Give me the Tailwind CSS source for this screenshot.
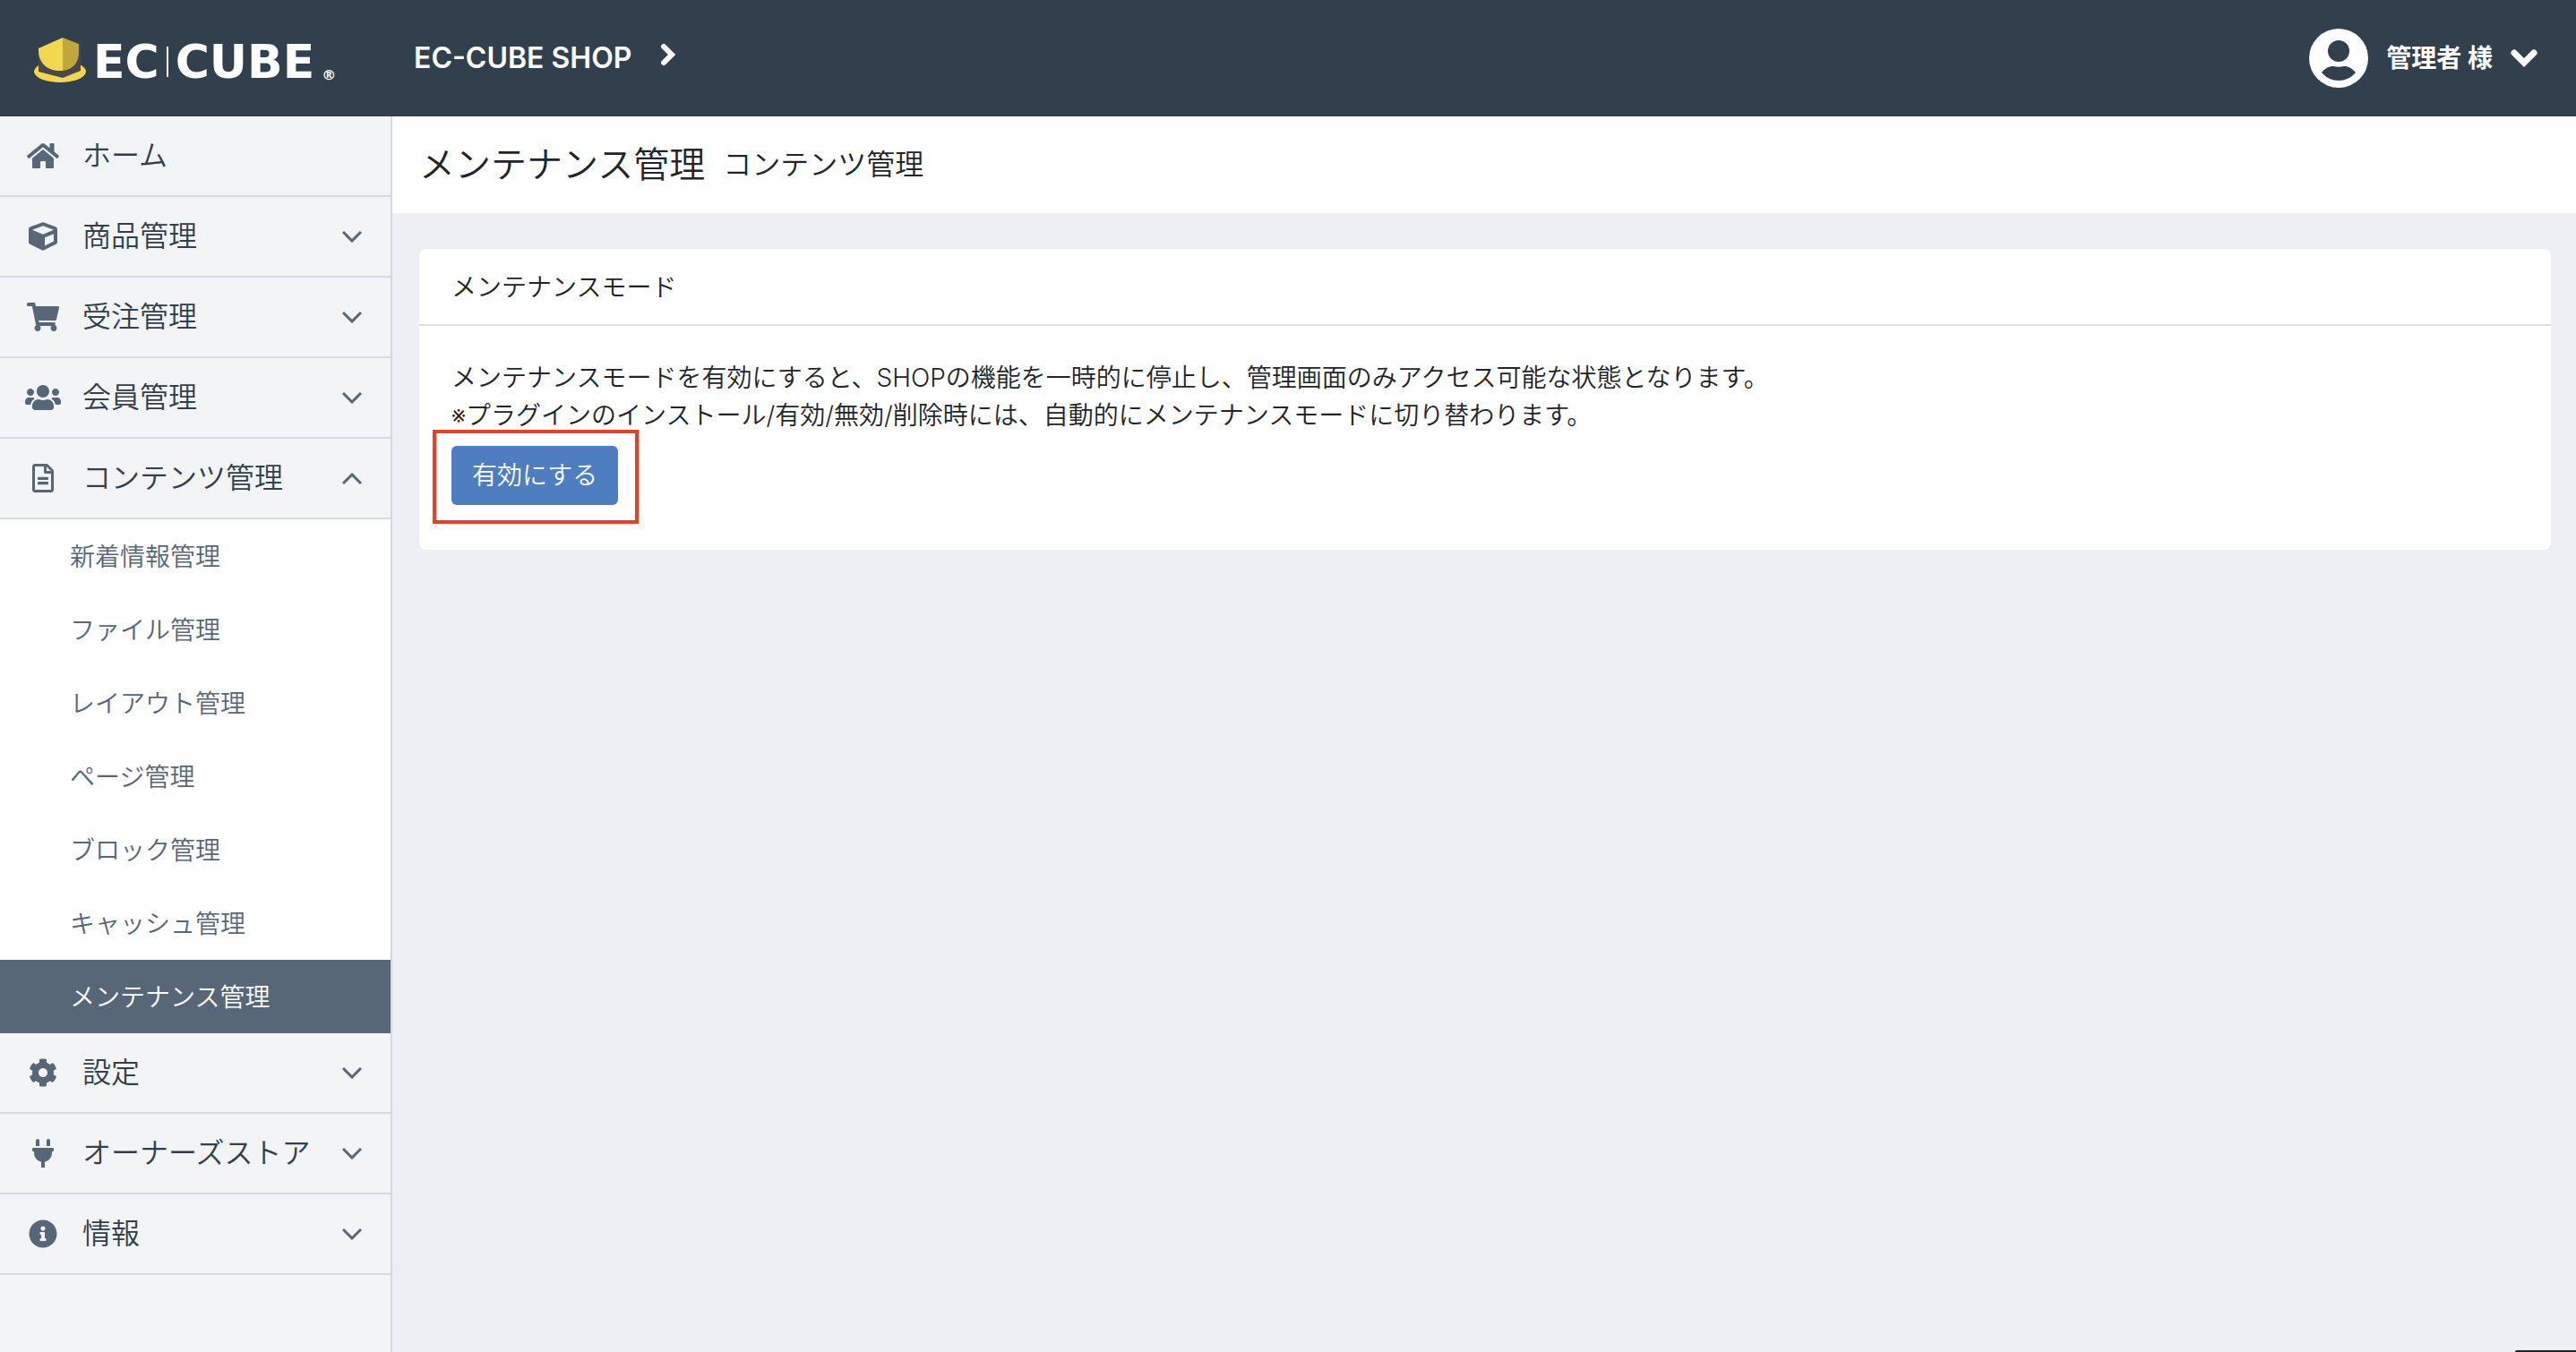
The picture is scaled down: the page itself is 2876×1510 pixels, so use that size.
<!DOCTYPE html>
<html lang="ja">
<head>
  <meta charset="UTF-8">
  <meta name="viewport" content="width=device-width, initial-scale=1">
  <title>メンテナンス管理 コンテンツ管理 - EC-CUBE SHOP</title>
  <script src="https://cdn.jsdelivr.net/npm/@tailwindcss/browser@4"></script>
</head>
<body class="min-h-screen flex flex-col bg-[#eeeff4] text-[#212529] font-['Inter','Noto_Sans_CJK_JP',sans-serif] font-[350] text-[28px] leading-[42px]">

  <!-- header -->
  <header class="h-[130px] flex items-center bg-[#323f4c] text-white">
    <a href="#" class="w-[438px] shrink-0 flex items-center pt-1 pl-[38px]">
      <svg class="w-[58px] h-[50px] shrink-0" viewBox="0 0 58 50" aria-hidden="true">
        <ellipse cx="29" cy="38" rx="29" ry="12" fill="#f3d74f"/>
        <path fill="#4c4650" d="M5 20l45-12h2v29l-20 8-27-7z"/>
        <path fill="#f3d74f" d="M32 0v37h-4C14 37 5 27 5 15v-3z"/>
        <path fill="#c0a73c" d="M32 0l18 7v9c0 12-7 20-18 21z"/>
      </svg>
      <span class="pt-1 ml-2 flex items-center font-['DejaVu_Sans',sans-serif] font-bold text-[52px] leading-[50px]">
        <span>EC</span>
        <span class="mx-2 w-0.5 h-[34px] bg-white"></span>
        <span>CUBE</span>
        <span class="ml-2 self-end text-[16px] leading-[20px]">®</span>
      </span>
    </a>
    <a href="#" class="ml-6 flex items-center gap-8 text-[32px] font-semibold">
      <span>EC-CUBE SHOP</span>
      <svg class="w-[18px] h-[26px] mb-2" viewBox="0 0 18 26" fill="none" stroke="currentColor" stroke-width="6" stroke-linecap="round" aria-hidden="true"><path d="M4 4l9 9-9 9"/></svg>
    </a>
    <button type="button" class="ml-auto mr-[43px] flex items-center gap-5 font-bold">
      <svg class="w-[66px] h-[66px]" viewBox="0 0 66 66" aria-hidden="true">
        <circle cx="33" cy="33" r="33" fill="#fff"/>
        <circle cx="33" cy="25" r="12" fill="#323f4c"/>
        <path fill="#323f4c" d="M14 49c5-6 9-7 13-7 4 1 8 1 12 0 4 0 8 1 13 7-10 12-28 12-38 0z"/>
      </svg>
      <span>管理者 様</span>
      <svg class="w-[30px] h-5" viewBox="0 0 30 20" fill="none" stroke="currentColor" stroke-width="7" stroke-linecap="round" aria-hidden="true"><path d="M4 4l11 11 11-11"/></svg>
    </button>
  </header>

  <div class="flex-1 flex">

    <!-- side navigation -->
    <nav class="w-[438px] shrink-0 border-r-2 border-[#d7d8e0] bg-[#f2f4f6] text-[#323f4c] text-[32px]">
      <a href="#" class="h-[90px] flex items-center gap-6 pl-7 pr-8 border-b-2 border-[#d7d8e0]">
        <svg class="w-10 h-8 fill-[#576777]" viewBox="0 0 576 512" aria-hidden="true"><path d="M280.37 148.26L96 300.11V464a16 16 0 0 0 16 16l112.06-.29a16 16 0 0 0 15.92-16V368a16 16 0 0 1 16-16h64a16 16 0 0 1 16 16v95.64a16 16 0 0 0 16 16.05L464 480a16 16 0 0 0 16-16V300L295.67 148.26a12.19 12.19 0 0 0-15.3 0zM571.6 251.47L488 182.56V44.05a12 12 0 0 0-12-12h-56a12 12 0 0 0-12 12v72.61L318.47 43a48 48 0 0 0-61 0L4.34 251.47a12 12 0 0 0-1.6 16.9l25.5 31A12 12 0 0 0 45.15 301l235.22-193.74a12.19 12.19 0 0 1 15.3 0L530.9 301a12 12 0 0 0 16.9-1.6l25.5-31a12 12 0 0 0-1.7-16.93z"/></svg>
        <span>ホーム</span>
      </a>
      <button type="button" class="w-full h-[90px] flex items-center gap-6 pl-7 pr-8 border-b-2 border-[#d7d8e0]">
        <svg class="w-10 h-8 fill-[#576777]" viewBox="0 0 512 512" aria-hidden="true"><path d="M239.1 6.3l-208 78c-18.7 7-31.1 25-31.1 45v225.1c0 18.2 10.3 34.8 26.5 42.9l208 104c13.5 6.8 29.4 6.8 42.9 0l208-104c16.3-8.1 26.5-24.8 26.5-42.9V129.3c0-20-12.4-37.9-31.1-44.9l-208-78C262 2.2 250 2.2 239.1 6.3zM256 68.4l192 72v1.1l-192 78-192-78v-1.1l192-72zm32 356V275.5l160-65v133.9l-160 80z"/></svg>
        <span>商品管理</span>
        <svg class="ml-auto w-[22px] h-[13px] stroke-[#576777]" viewBox="0 0 22 13" fill="none" stroke-width="3" aria-hidden="true"><path d="M1 1l10 10L21 1"/></svg>
      </button>
      <button type="button" class="w-full h-[90px] flex items-center gap-6 pl-7 pr-8 border-b-2 border-[#d7d8e0]">
        <svg class="w-10 h-8 fill-[#576777]" viewBox="0 0 576 512" aria-hidden="true"><path d="M528.12 301.319l47.273-208C578.806 78.301 567.391 64 551.99 64H159.208l-9.166-44.81C147.758 8.021 137.93 0 126.529 0H24C10.745 0 0 10.745 0 24v16c0 13.255 10.745 24 24 24h69.883l70.248 343.435C147.325 417.1 136 435.222 136 456c0 30.928 25.072 56 56 56s56-25.072 56-56c0-15.674-6.447-29.835-16.824-40h209.647C430.447 426.165 424 440.326 424 456c0 30.928 25.072 56 56 56s56-25.072 56-56c0-22.172-12.888-41.332-31.579-50.405l5.517-24.276c3.413-15.018-8.002-29.319-23.403-29.319H218.117l-6.545-32h293.145c11.206 0 20.92-7.754 23.403-18.681z"/></svg>
        <span>受注管理</span>
        <svg class="ml-auto w-[22px] h-[13px] stroke-[#576777]" viewBox="0 0 22 13" fill="none" stroke-width="3" aria-hidden="true"><path d="M1 1l10 10L21 1"/></svg>
      </button>
      <button type="button" class="w-full h-[90px] flex items-center gap-6 pl-7 pr-8 border-b-2 border-[#d7d8e0]">
        <svg class="w-10 h-8 fill-[#576777]" viewBox="0 0 640 512" aria-hidden="true"><path d="M96 224c35.3 0 64-28.7 64-64s-28.7-64-64-64-64 28.7-64 64 28.7 64 64 64zm448 0c35.3 0 64-28.7 64-64s-28.7-64-64-64-64 28.7-64 64 28.7 64 64 64zm32 32h-64c-17.6 0-33.5 7.1-45.1 18.6 40.3 22.1 68.9 62 75.1 109.4h66c17.7 0 32-14.3 32-32v-32c0-35.3-28.7-64-64-64zm-256 0c61.9 0 112-50.1 112-112S381.9 32 320 32 208 82.1 208 144s50.1 112 112 112zm76.8 32h-8.3c-20.8 10-43.9 16-68.5 16s-47.6-6-68.5-16h-8.3C179.6 288 128 339.6 128 403.2V432c0 26.5 21.5 48 48 48h288c26.5 0 48-21.5 48-48v-28.8c0-63.6-51.6-115.2-115.2-115.2zm-223.7-13.4C161.5 263.1 145.6 256 128 256H64c-35.3 0-64 28.7-64 64v32c0 17.7 14.3 32 32 32h65.9c6.3-47.4 34.9-87.3 75.2-109.4z"/></svg>
        <span>会員管理</span>
        <svg class="ml-auto w-[22px] h-[13px] stroke-[#576777]" viewBox="0 0 22 13" fill="none" stroke-width="3" aria-hidden="true"><path d="M1 1l10 10L21 1"/></svg>
      </button>
      <button type="button" aria-expanded="true" class="w-full h-[90px] flex items-center gap-6 pl-7 pr-8 border-b-2 border-[#d7d8e0]">
        <svg class="w-10 h-8 fill-[#576777]" viewBox="0 0 384 512" aria-hidden="true"><path d="M288 248v28c0 6.6-5.4 12-12 12H108c-6.6 0-12-5.4-12-12v-28c0-6.6 5.4-12 12-12h168c6.6 0 12 5.4 12 12zm-12 72H108c-6.6 0-12 5.4-12 12v28c0 6.6 5.4 12 12 12h168c6.6 0 12-5.4 12-12v-28c0-6.6-5.4-12-12-12zm108-188.1V464c0 26.5-21.5 48-48 48H48c-26.5 0-48-21.5-48-48V48C0 21.5 21.5 0 48 0h204.1C264.8 0 277 5.1 286 14.1L369.9 98c9 8.9 14.1 21.2 14.1 33.9zm-128-80V128h76.1L256 51.9zM336 464V176H232c-13.3 0-24-10.7-24-24V48H48v416h288z"/></svg>
        <span>コンテンツ管理</span>
        <svg class="ml-auto w-[22px] h-[13px] stroke-[#576777]" viewBox="0 0 22 13" fill="none" stroke-width="3" aria-hidden="true"><path d="M1 12L11 2l10 10"/></svg>
      </button>
      <ul class="bg-white text-[#576777] text-[28px]">
        <li><a href="#" class="block pt-[21px] pb-[19px] pl-[78px]">新着情報管理</a></li>
        <li><a href="#" class="block pt-[21px] pb-[19px] pl-[78px]">ファイル管理</a></li>
        <li><a href="#" class="block pt-[21px] pb-[19px] pl-[78px]">レイアウト管理</a></li>
        <li><a href="#" class="block pt-[21px] pb-[19px] pl-[78px]">ページ管理</a></li>
        <li><a href="#" class="block pt-[21px] pb-[19px] pl-[78px]">ブロック管理</a></li>
        <li><a href="#" class="block pt-[21px] pb-[19px] pl-[78px]">キャッシュ管理</a></li>
        <li><a href="#" aria-current="page" class="block pt-[21px] pb-[19px] pl-[78px] bg-[#576777] text-white">メンテナンス管理</a></li>
      </ul>
      <button type="button" class="w-full h-[90px] flex items-center gap-6 pl-7 pr-8 border-b-2 border-[#d7d8e0]">
        <svg class="w-10 h-8 fill-[#576777]" viewBox="0 0 512 512" aria-hidden="true"><path d="M487.4 315.7l-42.6-24.6c4.3-23.2 4.3-47 0-70.2l42.6-24.6c4.9-2.8 7.1-8.6 5.5-14-11.1-35.6-30-67.8-54.7-94.6-3.8-4.1-10-5.1-14.8-2.3L380.8 110c-17.9-15.4-38.5-27.3-60.8-35.1V25.8c0-5.6-3.9-10.5-9.4-11.7-36.7-8.2-74.3-7.8-109.2 0-5.5 1.2-9.4 6.1-9.4 11.7V75c-22.2 7.9-42.8 19.8-60.8 35.1L88.7 85.5c-4.9-2.8-11-1.9-14.8 2.3-24.7 26.7-43.6 58.9-54.7 94.6-1.7 5.4.6 11.2 5.5 14L67.3 221c-4.3 23.2-4.3 47 0 70.2l-42.6 24.6c-4.9 2.8-7.1 8.6-5.5 14 11.1 35.6 30 67.8 54.7 94.6 3.8 4.1 10 5.1 14.8 2.3l42.6-24.6c17.9 15.4 38.5 27.3 60.8 35.1v49.2c0 5.6 3.9 10.5 9.4 11.7 36.7 8.2 74.3 7.8 109.2 0 5.5-1.2 9.4-6.1 9.4-11.7v-49.2c22.2-7.9 42.8-19.8 60.8-35.1l42.6 24.6c4.9 2.8 11 1.9 14.8-2.3 24.7-26.7 43.6-58.9 54.7-94.6 1.5-5.5-.7-11.3-5.6-14.1zM256 336c-44.1 0-80-35.9-80-80s35.9-80 80-80 80 35.9 80 80-35.9 80-80 80z"/></svg>
        <span>設定</span>
        <svg class="ml-auto w-[22px] h-[13px] stroke-[#576777]" viewBox="0 0 22 13" fill="none" stroke-width="3" aria-hidden="true"><path d="M1 1l10 10L21 1"/></svg>
      </button>
      <button type="button" class="w-full h-[90px] flex items-center gap-6 pl-7 pr-8 border-b-2 border-[#d7d8e0]">
        <svg class="w-10 h-8 fill-[#576777]" viewBox="0 0 384 512" aria-hidden="true"><path d="M320,32a32,32,0,0,0-64,0v96h64Zm48,128H16A16,16,0,0,0,0,176v32a16,16,0,0,0,16,16H32v32A160.07,160.07,0,0,0,160,412.8V512h64V412.8A160.07,160.07,0,0,0,352,256V224h16a16,16,0,0,0,16-16V176A16,16,0,0,0,368,160ZM128,32a32,32,0,0,0-64,0v96h64Z"/></svg>
        <span>オーナーズストア</span>
        <svg class="ml-auto w-[22px] h-[13px] stroke-[#576777]" viewBox="0 0 22 13" fill="none" stroke-width="3" aria-hidden="true"><path d="M1 1l10 10L21 1"/></svg>
      </button>
      <button type="button" class="w-full h-[90px] flex items-center gap-6 pl-7 pr-8 border-b-2 border-[#d7d8e0]">
        <svg class="w-10 h-8 fill-[#576777]" viewBox="0 0 512 512" aria-hidden="true"><path d="M256 8C119.043 8 8 119.083 8 256c0 136.997 111.043 248 248 248s248-111.003 248-248C504 119.083 392.957 8 256 8zm0 110c23.196 0 42 18.804 42 42s-18.804 42-42 42-42-18.804-42-42 18.804-42 42-42zm56 254c0 6.627-5.373 12-12 12h-88c-6.627 0-12-5.373-12-12v-24c0-6.627 5.373-12 12-12h12v-64h-12c-6.627 0-12-5.373-12-12v-24c0-6.627 5.373-12 12-12h64c6.627 0 12 5.373 12 12v100h12c6.627 0 12 5.373 12 12v24z"/></svg>
        <span>情報</span>
        <svg class="ml-auto w-[22px] h-[13px] stroke-[#576777]" viewBox="0 0 22 13" fill="none" stroke-width="3" aria-hidden="true"><path d="M1 1l10 10L21 1"/></svg>
      </button>
    </nav>

    <!-- contents -->
    <main class="flex-1">
      <div class="h-[108px] flex items-center gap-5 px-[30px] bg-white">
        <h1 class="text-[40px] font-[350]">メンテナンス管理</h1>
        <span class="text-[32px]">コンテンツ管理</span>
      </div>

      <section class="mt-10 ml-[30px] mr-7 rounded-lg bg-white">
        <h2 class="pt-[22px] pb-5 px-9 border-b-2 border-[#dddddd] font-[350]">メンテナンスモード</h2>
        <div class="px-9 pt-[37px] pb-[50px]">
          <p>メンテナンスモードを有効にすると、SHOPの機能を一時的に停止し、管理画面のみアクセス可能な状態となります。<br>※プラグインのインストール/有効/無効/削除時には、自動的にメンテナンスモードに切り替わります。</p>
          <div class="relative w-fit mt-[13px]">
            <button type="button" class="block h-[66px] px-[23px] rounded-md bg-[#4e7ebf] text-white">有効にする</button>
            <div class="absolute -left-[21px] -right-[23px] -top-[18px] -bottom-[21px] border-4 border-[#ec3f25] pointer-events-none"></div>
          </div>
        </div>
      </section>
    </main>
  </div>

  <!-- collapsed debug bar -->
  <div class="fixed bottom-0 right-0 w-[68px] h-0.5 rounded-tl-sm bg-[#222222]"></div>

</body>
</html>
